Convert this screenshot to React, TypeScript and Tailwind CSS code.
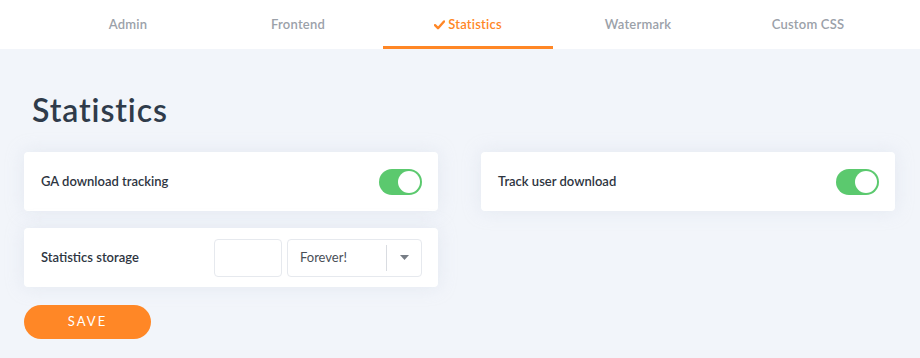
import { useState } from "react";

const tabs = ["Admin", "Frontend", "Statistics", "Watermark", "Custom CSS"];

function Toggle({ on }: { on: boolean }) {
  return (
    <div
      className={`flex h-[26px] w-[43px] items-center rounded-full p-[2px] ${
        on ? "justify-end bg-[#5bc96e]" : "justify-start bg-[#d5d9de]"
      }`}
    >
      <div className="h-[22px] w-[22px] rounded-full bg-white" />
    </div>
  );
}

function Card({ children }: { children: React.ReactNode }) {
  return (
    <div className="flex h-[59px] items-center justify-between rounded-[4px] bg-white pl-[17px] pr-[16px] shadow-[0_0_18px_rgba(200,210,225,0.35)]">
      {children}
    </div>
  );
}

export default function App() {
  const [active] = useState("Statistics");

  return (
    <div className="h-[358px] w-[920px] bg-[#f2f5fa] font-['Lato',sans-serif]">
      <nav className="flex h-[49px] bg-white pl-[43px]">
        {tabs.map((t) => (
          <div
            key={t}
            className={`flex w-[170px] items-center justify-center border-b-[3px] pt-[3px] text-[13px] font-semibold tracking-[0.2px] ${
              t === active ? "border-[#ff8726] text-[#ff8726]" : "border-transparent text-[#9ba1a9]"
            }`}
          >
            {t === active && (
              <svg width="11" height="10" viewBox="0 0 11 10" className="mr-[3px]">
                <path d="M1 5.2 L4 8.2 L10 1.5" fill="none" stroke="#ff8726" strokeWidth="2.4" strokeLinecap="round" strokeLinejoin="round" />
              </svg>
            )}
            {t}
          </div>
        ))}
      </nav>

      <div className="px-[24px]">
        <h1 className="mb-[22px] ml-[8px] mt-[41px] text-[32px] font-semibold leading-[40px] tracking-[0.9px] text-[#2f3b4a]">
          Statistics
        </h1>

        <div className="grid grid-cols-[414px_414px] gap-x-[43px] gap-y-[17px]">
          <Card>
            <span className="text-[13px] font-semibold text-[#2e353f]">GA download tracking</span>
            <Toggle on />
          </Card>
          <Card>
            <span className="text-[13px] font-semibold text-[#2e353f]">Track user download</span>
            <Toggle on />
          </Card>
          <Card>
            <span className="text-[13px] font-semibold text-[#2e353f]">Statistics storage</span>
            <div className="flex gap-[5px]">
              <input className="h-[38px] w-[68px] rounded-[4px] border border-[#e6e9ee] bg-white outline-none" />
              <div className="flex h-[38px] w-[135px] items-center rounded-[4px] border border-[#e6e9ee] bg-white">
                <span className="flex-1 pl-[12px] text-[13px] text-[#4a4f57]">Forever!</span>
                <div className="h-[26px] w-px bg-[#d9dce1]" />
                <div className="flex w-[34px] justify-center">
                  <svg width="9" height="5" viewBox="0 0 9 5">
                    <path d="M0 0 H9 L4.5 5 Z" fill="#777d85" />
                  </svg>
                </div>
              </div>
            </div>
          </Card>
        </div>

        <button
          type="button"
          className="mt-[18px] h-[34px] w-[127px] rounded-full bg-[#ff8726] text-[13px] tracking-[2px] text-white"
        >
          SAVE
        </button>
      </div>
    </div>
  );
}
